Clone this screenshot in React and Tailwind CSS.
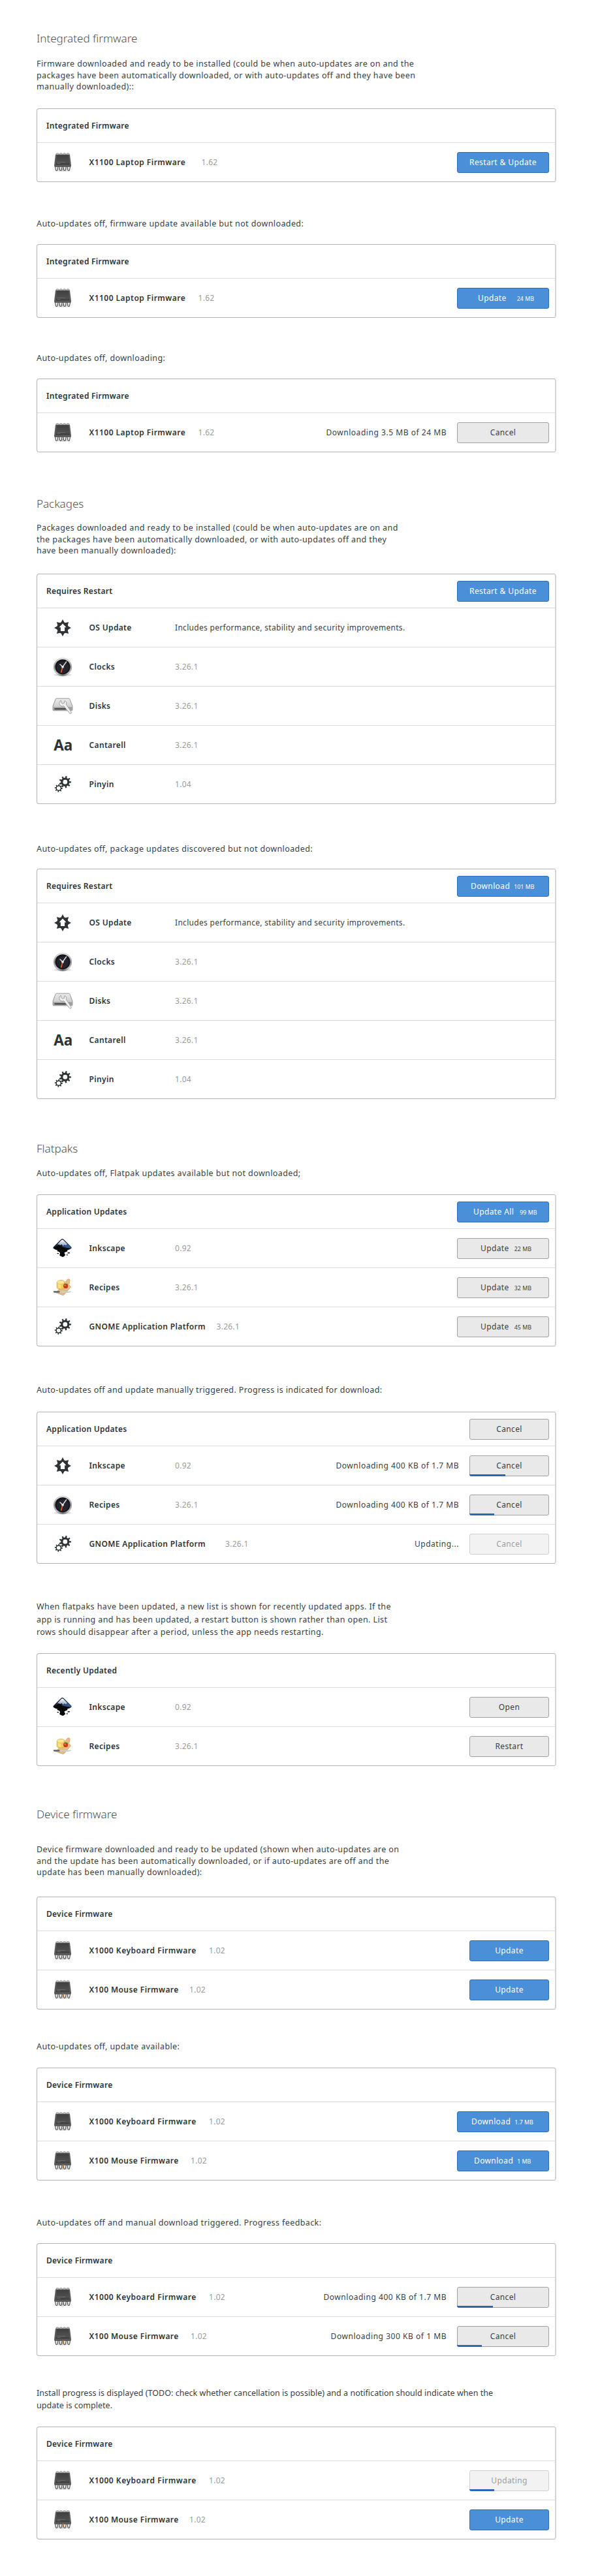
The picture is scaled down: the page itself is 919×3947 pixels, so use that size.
const polar = (cx, cy, r, a) => [cx + r * Math.sin(a), cy - r * Math.cos(a)];

// Closed outline of a gear with blocky teeth and a round hole.
function gearPath(cx, cy, outer, root, hole, teeth, turn = 0) {
  const step = (Math.PI * 2) / teeth;
  const pts = [];
  for (let i = 0; i < teeth; i++) {
    const a = i * step + turn;
    pts.push(polar(cx, cy, root, a - step * 0.27));
    pts.push(polar(cx, cy, outer, a - step * 0.17));
    pts.push(polar(cx, cy, outer, a + step * 0.17));
    pts.push(polar(cx, cy, root, a + step * 0.27));
  }
  const body = "M" + pts.map((p) => p[0].toFixed(2) + " " + p[1].toFixed(2)).join("L") + "Z";
  return `${body}M${cx - hole} ${cy}a${hole} ${hole} 0 1 0 ${hole * 2} 0a${hole} ${hole} 0 1 0 ${-hole * 2} 0Z`;
}

function starPath(cx, cy, outer, inner, n) {
  const step = Math.PI / n;
  const pts = [];
  for (let i = 0; i < n; i++) {
    const a = i * 2 * step;
    pts.push(polar(cx, cy, outer, a));
    pts.push(polar(cx, cy, inner, a + step * 0.72));
    pts.push(polar(cx, cy, inner, a + step * 1.28));
  }
  return "M" + pts.map((p) => p[0].toFixed(2) + " " + p[1].toFixed(2)).join("L") + "Z";
}

function ChipIcon({ spot }) {
  return (
    <svg width="28" height="30" viewBox="0 0 28 30">
      <defs>
        <linearGradient id="chip" x1="0" y1="0" x2="0" y2="1">
          <stop offset="0" stopColor="#3f3f3f" />
          <stop offset="0.75" stopColor="#505050" />
          <stop offset="1" stopColor="#3a3a3a" />
        </linearGradient>
        <radialGradient id="chipShade">
          <stop offset="0" stopColor="#000" stopOpacity="0.35" />
          <stop offset="1" stopColor="#000" stopOpacity="0" />
        </radialGradient>
      </defs>
      <ellipse cx="14" cy="25.5" rx="14" ry="4" fill="url(#chipShade)" />
      {[4, 9.3, 14.7, 20].map((x) => (
        <rect key={x} x={x} y="1" width="4" height="3" rx="1.2" fill="#d8d8d8" stroke="#6b6b6b" strokeWidth="0.8" />
      ))}
      <path d="M3.8 2.8H24.2Q25 2.8 25.2 4.2L27 19.5Q27.2 22 25.4 22H2.6Q.8 22 1 19.5L2.8 4.2Q3 2.8 3.8 2.8Z" fill="#5c5c5c" />
      <path d="M4.8 3.6H23.2L24.8 18.4H3.2Z" fill="url(#chip)" />
      <path d="M5.5 14.5H18M5.5 16.5H10.5" stroke="#717171" strokeWidth="0.8" />
      {[2.4, 8.6, 14.8, 21].map((x) => (
        <path key={x} d={`M${x} 21.2H${x + 4.6}L${x + 3.3} 27.4H${x + 1.3}Z`} fill="#e6e6e6" stroke="#4a4a4a" strokeWidth="1" />
      ))}
      {spot && <path d="M13 22l2-1.5 1.5 4-2 .8z" fill="#b8793a" />}
    </svg>
  );
}

function OsIcon() {
  return (
    <svg width="28" height="28" viewBox="0 0 28 28">
      <path fill="#2e3436" d={starPath(14, 14, 12.9, 8.9, 8)} />
      <path fill="#fff" d="M14 7.4L19.5 13.3H17.1V19H10.9V13.3H8.5Z" />
    </svg>
  );
}

function ClockIcon() {
  return (
    <svg width="30" height="30" viewBox="0 0 30 30">
      <defs>
        <linearGradient id="rim" x1="0" y1="0" x2="0" y2="1">
          <stop offset="0" stopColor="#f2f2f2" />
          <stop offset="0.5" stopColor="#8d8d8d" />
          <stop offset="0.85" stopColor="#c9c9c9" />
          <stop offset="1" stopColor="#555" />
        </linearGradient>
      </defs>
      <ellipse cx="15" cy="27" rx="13" ry="2.6" fill="#000" opacity="0.13" />
      <circle cx="15" cy="15" r="13.9" fill="url(#rim)" stroke="#a9a9a9" strokeWidth="0.5" />
      <circle cx="15" cy="14.8" r="11.6" fill="#17171c" />
      <circle cx="15" cy="15.6" r="9.2" fill="#24242f" />
      <path d="M15 14.8L12.8 22.8" stroke="#df5a14" strokeWidth="1.8" strokeLinecap="round" />
      <path d="M15 14.8L20.6 7M15 14.8L11 11" stroke="#dcdcdc" strokeWidth="1.5" strokeLinecap="round" />
      <circle cx="15" cy="14.8" r="1.9" fill="#e4e4e4" />
    </svg>
  );
}

function DiskIcon() {
  return (
    <svg width="32" height="26" viewBox="0 0 32 26">
      <defs>
        <linearGradient id="disk" x1="0" y1="0" x2="0" y2="1">
          <stop offset="0" stopColor="#ebebeb" />
          <stop offset="1" stopColor="#c2c2c2" />
        </linearGradient>
      </defs>
      <path d="M6.8 1.2H25.2Q26.4 1.2 26.9 2.3L31 13V18.6Q31 19.8 29.8 19.8H2.2Q1 19.8 1 18.6V13L5.1 2.3Q5.6 1.2 6.8 1.2Z" fill="url(#disk)" stroke="#8d8d8d" strokeWidth="0.9" />
      <path d="M1.4 14.2H30.6V18.4Q30.6 19.4 29.6 19.4H2.4Q1.4 19.4 1.4 18.4Z" fill="#a2a2a2" />
      <path d="M3.5 17.2H21" stroke="#3f3f3f" strokeWidth="2" />
      <path d="M13.4 4.2A4.6 4.6 0 0 0 17.6 12.6L27 24.4L29.2 23.6L29 21.8L21.4 10.4A4.8 4.8 0 0 0 19 4.6L18.4 8.2L15.8 9.4L13.6 7.6Z" fill="#f0f0f0" stroke="#8f8f8f" strokeWidth="0.8" strokeLinejoin="round" />
    </svg>
  );
}

function FontIcon() {
  return <span className="pl-[2px] text-[22.5px] font-bold leading-[30px] tracking-normal">Aa</span>;
}

function GearsIcon() {
  return (
    <svg width="28" height="28" viewBox="0 0 28 28">
      <path fill="#2e3436" fillRule="evenodd" d={gearPath(17.8, 10.2, 9.2, 6.6, 3.4, 9, 0.2)} />
      <path fill="#2e3436" fillRule="evenodd" d={gearPath(7.8, 19.6, 6.1, 4.4, 2.9, 8, 0.1)} />
    </svg>
  );
}

function InkscapeIcon() {
  return (
    <svg width="29" height="29" viewBox="0 0 29 29">
      <defs>
        <linearGradient id="ink" x1="0" y1="0" x2="1" y2="0.6">
          <stop offset="0.1" stopColor="#111" />
          <stop offset="0.5" stopColor="#1c2f52" />
          <stop offset="0.85" stopColor="#33598f" />
        </linearGradient>
        <linearGradient id="snow" x1="0" y1="0" x2="0" y2="1">
          <stop offset="0" stopColor="#fff" />
          <stop offset="1" stopColor="#8ea3c2" />
        </linearGradient>
      </defs>
      <path d="M12.4 1.4Q14.5 -.2 16.6 1.4L27.6 12.4Q29.2 14.4 27 15.4L20 18H9L2 15.4Q-.2 14.4 1.4 12.4Z" fill="url(#ink)" stroke="#111" strokeWidth="0.8" />
      <path d="M12.8 2.2Q14.5 1 16.2 2.2L22 8.2L20 10.4L17.6 9L16 11L13.4 8.6L11.4 10.2L7 8.4Z" fill="url(#snow)" />
      <path d="M1.5 13.5L8 10.6L9.6 8.6L11 10.4L12.6 8.8L14 12.6L19 13.6L27 14.8L21 17.6Q24.5 19.3 20 20.2Q16.5 21 18 23Q20.4 25 16.8 27.2Q14.4 28.8 12.2 26.6Q9.6 26.4 10.6 23.4Q12 21 8.2 19.4Q4.4 18.8 8.4 17.4Q1.4 16.4 1.5 13.5Z" fill="#070707" />
      <path d="M6 22.3q2.2-1.4 3.2.2q-1.3 1.9-3.2-.2ZM21.6 22.2q2.6-2.6 4.6-.8q.4 1.8-4.6.8ZM20.6 24.4q1.4-.9 2.4.5q-1.2 1.6-2.4-.5Z" fill="#0a0a0a" />
    </svg>
  );
}

function RecipesIcon() {
  return (
    <svg width="29" height="27" viewBox="0 0 29 27">
      <path d="M22.4 1.2Q25.6-.2 26.2 2.4L24.6 9.6L27.6 12.8L17 25Q15.4 26 13.6 25L4.4 21.6L17 8Z" fill="#e6bd84" stroke="#c99a5d" strokeWidth="0.7" />
      <path d="M6.2 14.6V6Q6.4 3 12 2.4Q17.4 2.4 17.8 5.2V14.6Q12 18 6.2 14.6Z" fill="#f0cb58" stroke="#cf9f34" strokeWidth="0.6" />
      <ellipse cx="12" cy="5.6" rx="5" ry="2.4" fill="#fae99c" />
      <path d="M8 14V8L12.4 10V15.6Z" fill="#f8e08a" />
      <circle cx="19.6" cy="11.4" r="3.6" fill="#d2361c" />
      <circle cx="18.7" cy="10.4" r="1.1" fill="#f08a70" />
      <path d="M18.4 7.8L20 9.2L22.4 8" stroke="#3f8a2a" strokeWidth="1.2" fill="none" />
      <path d="M10 19.6L28 20Q25 21.8 18 21.8H10Z" fill="#dcdcdc" stroke="#a5a5a5" strokeWidth="0.4" />
      <path d="M1 19H10.4V21.8H2Q.2 21 1 19Z" fill="#6f6f6f" />
    </svg>
  );
}

const ICONS = {
  chip: <ChipIcon />,
  chip2: <ChipIcon spot />,
  os: <OsIcon />,
  clock: <ClockIcon />,
  disk: <DiskIcon />,
  font: <FontIcon />,
  gears: <GearsIcon />,
  inkscape: <InkscapeIcon />,
  recipes: <RecipesIcon />,
};

const TONES = {
  blue: "border-[#2f6db3] bg-[#4a90d9] text-white",
  gray: "border-[#a1a1a1] bg-[#e9e9e9] text-[#3a4042]",
  off: "border-[#cfcfcf] bg-[#f2f2f2] text-[#9a9fa1]",
};

function Button({ tone = "gray", wide, label, size, pad = "pl-0", gap = "gap-2", progress }) {
  return (
    <button
      className={`relative flex h-8 shrink-0 items-center rounded-[3px] border text-[12px] tracking-[0.38px] ${TONES[tone]} ${wide ? "w-[141px]" : "w-[122px]"} ${size ? `${pad} ${gap}` : "justify-center"}`}
    >
      <span>{label}</span>
      {size && <span className="pt-[2px] text-[8.8px] tracking-[0.05px]">{size}</span>}
      {progress && <span className={`absolute -bottom-px -left-px h-[3px] rounded-bl-[3px] bg-[#2f66b0] ${progress}`} />}
    </button>
  );
}

function Card({ title, action, children }) {
  return (
    <div className="w-[796px] rounded-[4px] border border-r-2 border-[#b4b4b4] border-r-[#d4d4d4] bg-white">
      <div className="flex h-[51px] items-center justify-between pl-[14px] pr-[9px]">
        <h2 className="font-semibold tracking-[0.28px]">{title}</h2>
        {action}
      </div>
      {children}
    </div>
  );
}

function Row({ icon, name, nameWidth = "w-[131.5px]", track = "tracking-[0.35px]", version, detail, status, action }) {
  return (
    <div className="flex h-[60px] items-center border-t border-[#dcdcda] pr-[9px]">
      <div className="flex w-[77.5px] shrink-0 justify-center">{ICONS[icon]}</div>
      <div className={`ml-[2px] shrink-0 whitespace-nowrap font-semibold ${track} ${nameWidth}`}>{name}</div>
      {version && <div className="tracking-[0.28px] text-[#9b9b9b]">{version}</div>}
      {detail && <div className="tracking-[0.31px] text-[#3a4042]">{detail}</div>}
      <div className="ml-auto flex items-center gap-4">
        {status && <span className="tracking-[0.54px] text-[#3a4042]">{status}</span>}
        {action}
      </div>
    </div>
  );
}

function Intro({ box, heading, lines, gap = "mt-0", leading = "leading-[17.5px]", track = "tracking-[0.4px]" }) {
  return (
    <div className={box}>
      {heading && <h1 className="text-[17px] font-light leading-6 tracking-normal text-[#4c5153]">{heading}</h1>}
      <p className={`whitespace-nowrap text-[12.5px] text-[#3a4042] ${leading} ${track} ${gap}`}>
        {lines.map((l) => (
          <span key={l} className="block">{l}</span>
        ))}
      </p>
    </div>
  );
}

const packages = (
  <>
    <Row icon="os" name="OS Update" detail="Includes performance, stability and security improvements." />
    <Row icon="clock" name="Clocks" version="3.26.1" />
    <Row icon="disk" name="Disks" version="3.26.1" />
    <Row icon="font" name="Cantarell" version="3.26.1" />
    <Row icon="gears" name="Pinyin" version="1.04" />
  </>
);

const laptop = { icon: "chip", name: "X1100 Laptop Firmware", track: "tracking-[0.47px]", version: "1.62" };
const keyboard = { icon: "chip", name: "X1000 Keyboard Firmware", track: "tracking-[0.52px]", nameWidth: "w-[183.5px]", version: "1.02" };
const mouse = { icon: "chip2", name: "X100 Mouse Firmware", track: "tracking-[0.42px]", version: "1.02" };

export default function App() {
  return (
    <main className="min-h-[3947px] w-[919px] bg-white pl-14 font-['Noto_Sans',sans-serif] text-[12px] leading-[18px] text-[#2e3436]">
      <Intro
        box="h-[166px] pt-[47px]"
        heading="Integrated firmware"
        gap="mt-[18px]"
        lines={[
          "Firmware downloaded and ready to be installed (could be when auto-updates are on and the",
          "packages have been automatically downloaded, or with auto-updates off and they have been",
          "manually downloaded)::",
        ]}
      />
      <Card title="Integrated Firmware">
        <Row {...laptop} nameWidth="w-[172px]" action={<Button tone="blue" wide label="Restart & Update" />} />
      </Card>

      <Intro box="h-[95px] pt-[54.5px]" lines={["Auto-updates off, firmware update available but not downloaded:"]} />
      <Card title="Integrated Firmware">
        <Row {...laptop} nameWidth="w-[167px]" action={<Button tone="blue" wide label="Update" size="24 MB" pad="pl-[31px]" gap="gap-4" />} />
      </Card>

      <Intro box="h-[93px] pt-[53px]" lines={["Auto-updates off, downloading:"]} />
      <Card title="Integrated Firmware">
        <Row {...laptop} nameWidth="w-[167px]" status="Downloading 3.5 MB of 24 MB" action={<Button wide label="Cancel" />} />
      </Card>

      <Intro
        box="h-[186px] pt-[67px]"
        heading="Packages"
        gap="mt-4"
        lines={[
          "Packages downloaded and ready to be installed (could be when auto-updates are on and",
          "the packages have been automatically downloaded, or with auto-updates off and they",
          "have been manually downloaded):",
        ]}
      />
      <Card title="Requires Restart" action={<Button tone="blue" wide label="Restart & Update" />}>
        {packages}
      </Card>

      <Intro box="h-[99px] pt-[60px]" lines={["Auto-updates off, package updates discovered but not downloaded:"]} />
      <Card title="Requires Restart" action={<Button tone="blue" wide label="Download" size="101 MB" pad="pl-[20px]" gap="gap-[6px]" />}>
        {packages}
      </Card>

      <Intro
        box="h-[146px] pt-[63.5px]"
        heading="Flatpaks"
        gap="mt-[17px]"
        lines={["Auto-updates off, Flatpak updates available but not downloaded;"]}
      />
      <Card title="Application Updates" action={<Button tone="blue" wide label="Update All" size="99 MB" pad="pl-[24px]" gap="gap-[9px]" />}>
        <Row icon="inkscape" name="Inkscape" version="0.92" action={<Button wide label="Update" size="22 MB" pad="pl-[35px]" />} />
        <Row icon="recipes" name="Recipes" version="3.26.1" action={<Button wide label="Update" size="32 MB" pad="pl-[35px]" />} />
        <Row icon="gears" name="GNOME Application Platform" nameWidth="w-[195px]" version="3.26.1" action={<Button wide label="Update" size="45 MB" pad="pl-[35px]" />} />
      </Card>

      <Intro box="h-[100px] pt-[57.5px]" track="tracking-[0.38px]" lines={["Auto-updates off and update manually triggered. Progress is indicated for download:"]} />
      <Card title="Application Updates" action={<Button label="Cancel" />}>
        <Row icon="os" name="Inkscape" version="0.92" status="Downloading 400 KB of 1.7 MB" action={<Button label="Cancel" progress="w-[55px]" />} />
        <Row icon="clock" name="Recipes" version="3.26.1" status="Downloading 400 KB of 1.7 MB" action={<Button label="Cancel" progress="w-[38px]" />} />
        <Row icon="gears" name="GNOME Application Platform" nameWidth="w-[208.5px]" version="3.26.1" status="Updating..." action={<Button tone="off" label="Cancel" />} />
      </Card>

      <Intro
        box="h-[137px] pt-[56px]"
        leading="leading-[19.5px]"
        lines={[
          "When flatpaks have been updated, a new list is shown for recently updated apps. If the",
          "app is running and has been updated, a restart button is shown rather than open. List",
          "rows should disappear after a period, unless the app needs restarting.",
        ]}
      />
      <Card title="Recently Updated">
        <Row icon="inkscape" name="Inkscape" version="0.92" action={<Button label="Open" />} />
        <Row icon="recipes" name="Recipes" version="3.26.1" action={<Button label="Restart" />} />
      </Card>

      <Intro
        box="h-[200px] pt-[62px]"
        heading="Device firmware"
        gap="mt-[33px]"
        lines={[
          "Device firmware downloaded and ready to be updated (shown when auto-updates are on",
          "and the update has been automatically downloaded, or if auto-updates are off and the",
          "update has been manually downloaded):",
        ]}
      />
      <Card title="Device Firmware">
        <Row {...keyboard} action={<Button tone="blue" label="Update" />} />
        <Row {...mouse} nameWidth="w-[153.5px]" action={<Button tone="blue" label="Update" />} />
      </Card>

      <Intro box="h-[89px] pt-[48px]" lines={["Auto-updates off, update available:"]} />
      <Card title="Device Firmware">
        <Row {...keyboard} action={<Button tone="blue" wide label="Download" size="1.7 MB" pad="pl-[21px]" gap="gap-[6px]" />} />
        <Row {...mouse} nameWidth="w-[155.5px]" action={<Button tone="blue" wide label="Download" size="1 MB" pad="pl-[25px]" gap="gap-[6px]" />} />
      </Card>

      <Intro box="h-[96px] pt-[56px]" lines={["Auto-updates off and manual download triggered. Progress feedback:"]} />
      <Card title="Device Firmware">
        <Row {...keyboard} status="Downloading 400 KB of 1.7 MB" action={<Button wide label="Cancel" progress="w-[55px]" />} />
        <Row {...mouse} nameWidth="w-[155.5px]" status="Downloading 300 KB of 1 MB" action={<Button wide label="Cancel" progress="w-[38px]" />} />
      </Card>

      <Intro
        box="h-[108px] pt-[47px]"
        leading="leading-[19px]"
        track="tracking-[0.03px]"
        lines={[
          "Install progress is displayed (TODO: check whether cancellation is possible) and a notification should indicate when the",
          "update is complete.",
        ]}
      />
      <Card title="Device Firmware">
        <Row {...keyboard} action={<Button tone="off" label="Updating" progress="w-[38px]" />} />
        <Row {...mouse} nameWidth="w-[153.5px]" action={<Button tone="blue" label="Update" />} />
      </Card>
    </main>
  );
}
